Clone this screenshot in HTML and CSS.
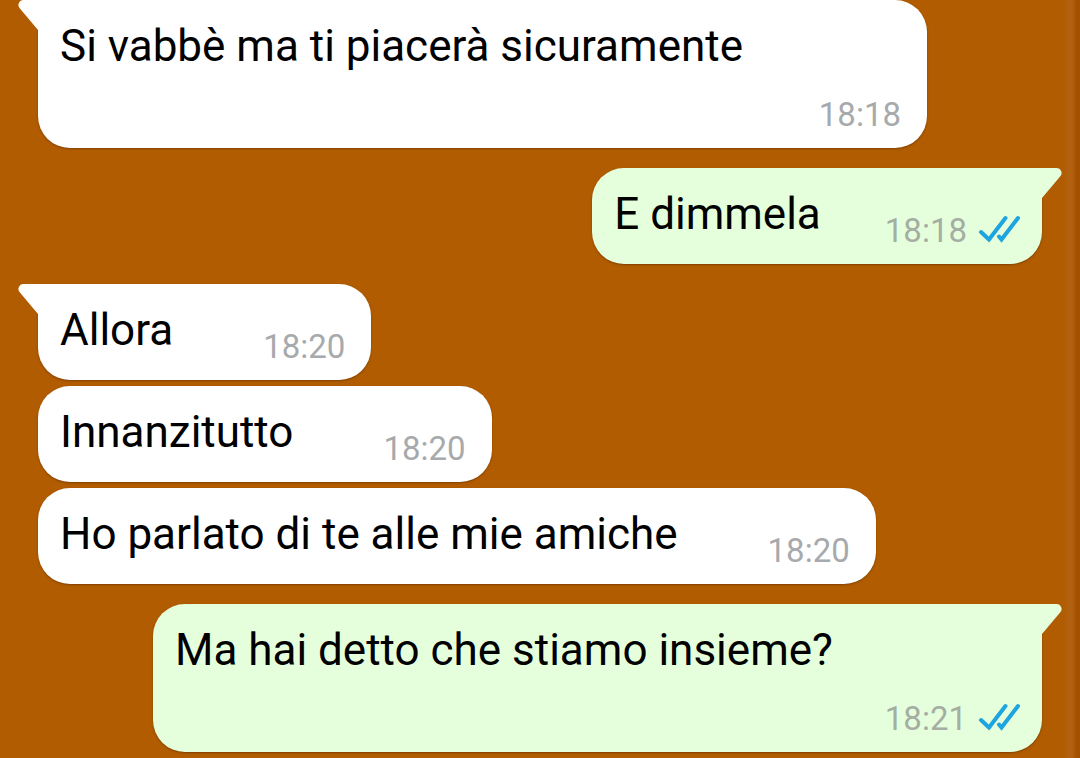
FILE: index.html
```
<!DOCTYPE html>
<html lang="it">
<head>
    <meta charset="UTF-8">
    <meta name="viewport" content="width=device-width, initial-scale=1.0">
    <title>Chat</title>
    <link rel="stylesheet" href="styles.css">
</head>
<body>

    <!-- Shared shapes -->
    <svg class="sprite" aria-hidden="true">
        <symbol id="tail" viewBox="0 0 21 31">
            <path d="M21 0H5.500A5 5 0 0 0 1.700 8.300L20 30H21Z"/>
        </symbol>
        <symbol id="ticks" viewBox="0 0 42 30">
            <path d="M3 19L11 26.500L27.500 5M21 23.500L23.500 26.500L40 5"/>
        </symbol>
    </svg>

    <main class="chat">
        <div class="message received first">
            <svg class="tail"><use href="#tail"/></svg>
            <p class="text">Si vabbè ma ti piacerà sicuramente</p>
            <div class="meta"><time>18:18</time></div>
        </div>

        <div class="message sent first">
            <svg class="tail"><use href="#tail"/></svg>
            <p class="text">E dimmela</p>
            <div class="meta"><time>18:18</time><svg class="ticks"><use href="#ticks"/></svg></div>
        </div>

        <div class="message received first">
            <svg class="tail"><use href="#tail"/></svg>
            <p class="text">Allora</p>
            <div class="meta"><time>18:20</time></div>
        </div>
        <div class="message received">
            <p class="text">Innanzitutto</p>
            <div class="meta"><time>18:20</time></div>
        </div>
        <div class="message received">
            <p class="text">Ho parlato di te alle mie amiche</p>
            <div class="meta"><time>18:20</time></div>
        </div>

        <div class="message sent first">
            <svg class="tail"><use href="#tail"/></svg>
            <p class="text">Ma hai detto che stiamo insieme?</p>
            <div class="meta"><time>18:21</time><svg class="ticks"><use href="#ticks"/></svg></div>
        </div>
    </main>

</body>
</html>
```
FILE: styles.css
```
* {
    box-sizing: border-box;
}
body {
    font-family: Roboto, sans-serif;
    margin: 0;
    min-height: 100vh;
    background: linear-gradient(to left, #a25000 0, #a65200 4px, #b0600e 7px, #b0600e 12px, #b15c00 17px) #b15c00;
}
.sprite {
    display: none;
}
.chat {
    display: flex;
    flex-direction: column;
    align-items: flex-start;
    padding: 0 38px 6px;
}
.message {
    position: relative;
    display: flex;
    flex-wrap: wrap;
    align-items: flex-end;
    max-width: 889px;
    margin-top: 6px;
    border-radius: 32px;
    box-shadow: 0 1px 2px rgba(80, 40, 0, 0.5);
}
.message.first {
    margin-top: 20px;
}
.message.first:first-child {
    margin-top: 0;
}
.received {
    padding: 20px 26px 14px 22px;
    column-gap: 90px;
    background-color: #fff;
    color: #fff;
}
.received.first {
    border-top-left-radius: 0;
}
.sent {
    align-self: flex-end;
    padding: 20px 22px 14px;
    column-gap: 64px;
    background-color: #e5ffdc;
    color: #e5ffdc;
}
.sent.first {
    border-top-right-radius: 0;
}
.tail {
    position: absolute;
    top: 0;
    left: -20px;
    width: 21px;
    height: 31px;
    fill: currentColor;
}
.sent .tail {
    left: auto;
    right: -20px;
    transform: scaleX(-1);
}
.text {
    margin: 0 0 10px;
    font-size: 44px;
    line-height: 52px;
    color: #000;
}
.meta {
    display: flex;
    align-items: center;
    gap: 11px;
    margin: 13px 0 0 auto;
    font-size: 33px;
    line-height: 39px;
    color: #a7aaac;
}
.sent .meta {
    color: #a5aea3;
}
.ticks {
    width: 42px;
    height: 30px;
    margin-bottom: 6px;
    fill: none;
    stroke: #1da5df;
    stroke-width: 4;
    stroke-linecap: round;
}
```
